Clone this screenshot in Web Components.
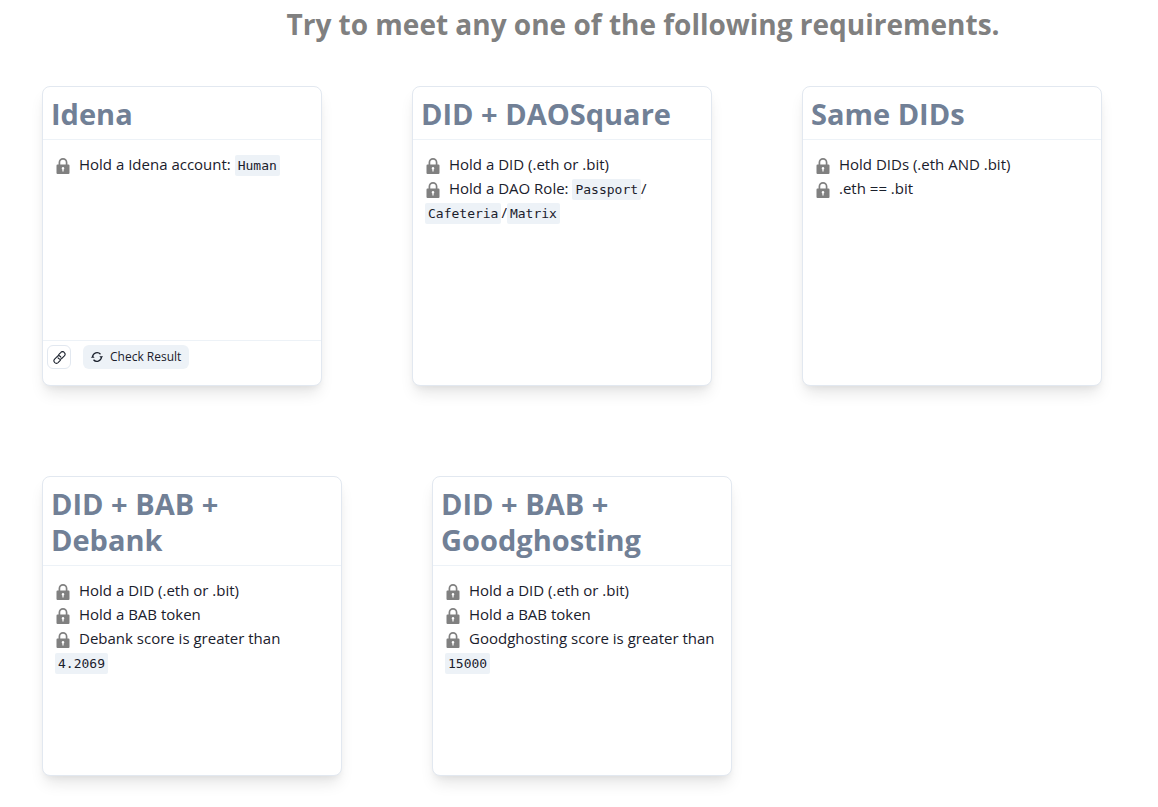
<!DOCTYPE html>
<html lang="en">
<head>
<meta charset="utf-8">
<meta name="viewport" content="width=device-width, initial-scale=1">
<title>Requirements</title>
<style>
    body {
        margin: 0;
        background: #fff;
        color: #1a202c;
        font-family: "Open Sans", "Noto Sans", sans-serif;
        font-size: 15px;
        line-height: 24px;
    }
</style>
</head>
<body>
<requirement-board>
    <span slot="title">Try to meet any one of the following requirements.</span>
    <requirement-card heading="Idena" style="--card-width: 280px">
        <requirement-item>Hold a Idena account: <code-chip>Human</code-chip></requirement-item>
        <icon-button slot="footer" icon="link" label="Open link"></icon-button>
        <icon-button slot="footer" icon="refresh">Check Result</icon-button>
    </requirement-card>
    <requirement-card heading="DID + DAOSquare">
        <requirement-item>Hold a DID (.eth or .bit)</requirement-item>
        <requirement-item>Hold a DAO Role: <code-chip>Passport</code-chip>/<wbr><code-chip>Cafeteria</code-chip>/<code-chip>Matrix</code-chip></requirement-item>
    </requirement-card>
    <requirement-card heading="Same DIDs">
        <requirement-item>Hold DIDs (.eth AND .bit)</requirement-item>
        <requirement-item>.eth == .bit</requirement-item>
    </requirement-card>
    <requirement-card heading="DID + BAB + Debank">
        <requirement-item>Hold a DID (.eth or .bit)</requirement-item>
        <requirement-item>Hold a BAB token</requirement-item>
        <requirement-item>Debank score is greater than <code-chip>4.2069</code-chip></requirement-item>
    </requirement-card>
    <requirement-card heading="DID + BAB + Goodghosting">
        <requirement-item>Hold a DID (.eth or .bit)</requirement-item>
        <requirement-item>Hold a BAB token</requirement-item>
        <requirement-item>Goodghosting score is greater than <code-chip>15000</code-chip></requirement-item>
    </requirement-card>
</requirement-board>

<script>
const ICONS = {
    lock: `<svg viewBox="0 0 16 18" width="16" height="18" aria-hidden="true">
        <path d="M4.4 8V5.4a3.6 3.6 0 0 1 7.2 0V8" fill="none" stroke="currentColor" stroke-width="1.7"/>
        <path fill="currentColor" fill-rule="evenodd" d="M2.5 7.5h11a1 1 0 0 1 1 1V16a1 1 0 0 1-1 1h-11a1 1 0 0 1-1-1V8.5a1 1 0 0 1 1-1zM8 9.9a1.4 1.4 0 0 0-.6 2.6V14.6h1.2v-2.1A1.4 1.4 0 0 0 8 9.9z"/>
    </svg>`,
    link: `<svg viewBox="0 0 24 24" width="13" height="13" aria-hidden="true" fill="none" stroke="currentColor" stroke-width="2" stroke-linecap="round" stroke-linejoin="round">
        <path d="M10.5 6.5 14.2 2.8a4.3 4.3 0 0 1 6.8 0 4.8 4.8 0 0 1 0 6.4l-4.6 4.6a4.4 4.4 0 0 1-6.2 0 4 4 0 0 1-.9-1.4"/>
        <path d="M13.5 17.5 9.8 21.2a4.3 4.3 0 0 1-6.8 0 4.8 4.8 0 0 1 0-6.4l4.6-4.6a4.4 4.4 0 0 1 6.2 0 4 4 0 0 1 .9 1.4"/>
    </svg>`,
    refresh: `<svg viewBox="0 0 24 24" width="12" height="12" aria-hidden="true" fill="none" stroke="currentColor" stroke-width="2.4">
        <path d="M3.2 11.5A8.9 8.9 0 0 1 19 6.5M20.8 12.5A8.9 8.9 0 0 1 5 17.5"/>
        <path d="M16.8 10.5H24L20.8 15zM7.2 13.5H0L3.2 9z" fill="currentColor" stroke="none"/>
    </svg>`
};

class RequirementBoard extends HTMLElement {
    constructor() {
        super();
        this.attachShadow({ mode: 'open' });
    }
    connectedCallback() {
        this.shadowRoot.innerHTML = `
            <style>
            :host {
                display: block;
            }
            h1 {
                margin: 0;
                padding: 6px 0 44px 128px;
                color: #808080;
                font-size: 28px;
                font-weight: 700;
                line-height: 36px;
                text-align: center;
            }
            .cards {
                display: flex;
                flex-wrap: wrap;
                gap: 90px;
                padding: 0 42px 30px;
            }
            </style>
            <h1><slot name="title"></slot></h1>
            <div class="cards"><slot></slot></div>
        `;
    }
}

class RequirementCard extends HTMLElement {
    constructor() {
        super();
        this.attachShadow({ mode: 'open' });
    }
    connectedCallback() {
        const heading = this.getAttribute('heading') ?? '';
        const hasFooter = this.querySelector('[slot="footer"]') !== null;
        this.shadowRoot.innerHTML = `
            <style>
            :host {
                display: flex;
                flex-direction: column;
                box-sizing: border-box;
                width: var(--card-width, 300px);
                min-height: 300px;
                border: 1px solid #e2e8f0;
                border-radius: 8px;
                background: #fff;
                box-shadow: 0 10px 15px -3px rgba(0, 0, 0, 0.1), 0 4px 6px -2px rgba(0, 0, 0, 0.05);
            }
            h2 {
                margin: 0;
                padding: 9px 8px 7px;
                border-bottom: 1px solid #edf2f7;
                color: #718096;
                font-size: 29px;
                font-weight: 700;
                line-height: 36px;
            }
            .body {
                flex: 1;
                padding: 12px;
            }
            footer {
                display: flex;
                gap: 12px;
                padding: 4px 4px 16px;
                border-top: 1px solid #edf2f7;
            }
            </style>
            <h2>${heading}</h2>
            <div class="body"><slot></slot></div>
            ${hasFooter ? '<footer><slot name="footer"></slot></footer>' : ''}
        `;
    }
}

class RequirementItem extends HTMLElement {
    constructor() {
        super();
        this.attachShadow({ mode: 'open' });
    }
    connectedCallback() {
        this.shadowRoot.innerHTML = `
            <style>
            :host {
                display: block;
            }
            svg {
                margin-right: 8px;
                color: #808080;
                vertical-align: -5px;
            }
            </style>
            ${ICONS.lock}<slot></slot>
        `;
    }
}

class CodeChip extends HTMLElement {
    constructor() {
        super();
        this.attachShadow({ mode: 'open' });
    }
    connectedCallback() {
        // no whitespace around <code>, it would show up between the chips
        this.shadowRoot.innerHTML = `<style>
            :host {
                display: inline;
            }
            code {
                padding: 3px;
                border-radius: 2px;
                background: #edf2f7;
                font-family: "DejaVu Sans Mono", monospace;
                font-size: 13px;
                line-height: 16px;
            }
            </style><code><slot></slot></code>`;
    }
}

class IconButton extends HTMLElement {
    constructor() {
        super();
        this.attachShadow({ mode: 'open' });
    }
    connectedCallback() {
        const icon = ICONS[this.getAttribute('icon')] ?? '';
        const label = this.getAttribute('label');
        this.shadowRoot.innerHTML = `
            <style>
            :host {
                display: block;
            }
            button {
                display: flex;
                align-items: center;
                justify-content: center;
                gap: 7px;
                box-sizing: border-box;
                height: 24px;
                min-width: 24px;
                padding: 0 8px;
                border: 0;
                border-radius: 6px;
                background: #edf2f7;
                color: inherit;
                font-family: inherit;
                font-size: 12px;
                font-weight: 500;
                line-height: 16px;
                cursor: pointer;
            }
            button.outline {
                padding: 0;
                border: 1px solid #e2e8f0;
                background: transparent;
            }
            </style>
            ${label
                ? `<button type="button" class="outline" aria-label="${label}">${icon}</button>`
                : `<button type="button">${icon}<slot></slot></button>`}
        `;
    }
}

window.customElements.define('requirement-board', RequirementBoard);
window.customElements.define('requirement-card', RequirementCard);
window.customElements.define('requirement-item', RequirementItem);
window.customElements.define('code-chip', CodeChip);
window.customElements.define('icon-button', IconButton);
</script>
</body>
</html>
